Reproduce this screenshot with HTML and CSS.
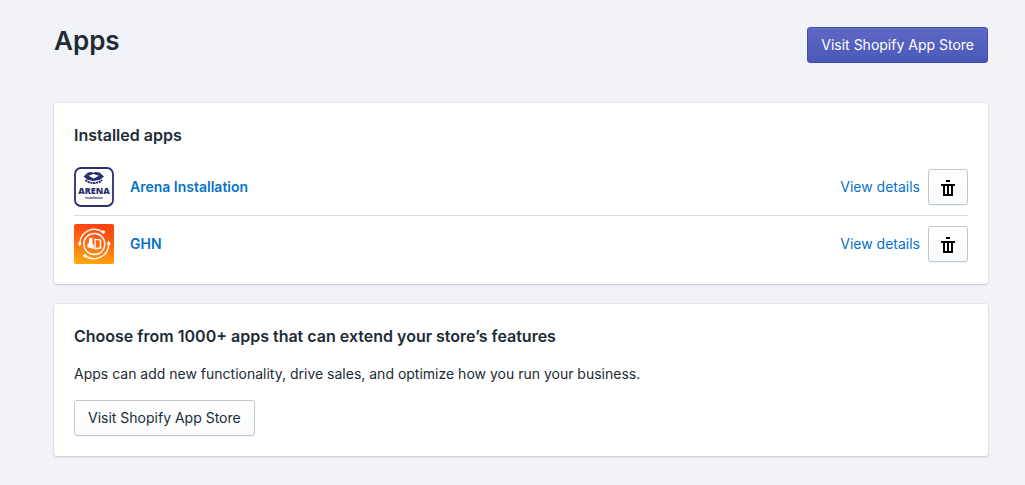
FILE: index.html
```html
<!DOCTYPE html>
<html lang="en">
<head>
<meta charset="utf-8">
<title>Apps</title>
<link rel="stylesheet" href="styles.css">
</head>
<body>
<svg class="sprite" aria-hidden="true">
  <symbol id="trash" viewBox="0 0 14 16">
    <path fill="#000" fill-rule="evenodd" d="M5 0h4v2H5zM0 4h14v2h-2v10H2V6H0zM4 6v8h2V6zM8 6v8h2V6z"/>
  </symbol>
</svg>
<main class="page">
  <header class="page-header">
    <h1 class="page-title">Apps</h1>
    <button class="button button-primary" type="button">Visit Shopify App Store</button>
  </header>

  <section class="card">
    <h2 class="card-title">Installed apps</h2>
    <ul class="app-list">
      <li class="app">
        <svg class="app-icon" viewBox="0 0 40 40" aria-hidden="true">
          <rect x="1" y="1" width="38" height="38" rx="6" fill="#fff" stroke="#29306b" stroke-width="1.8"/>
          <path fill="#29306b" fill-rule="evenodd" d="M9.500 9.500l4.500-4 3.500-.5 2 .8 2-.8 4 .5 4.500 4-4 3.200-6.500 1.300-6-1.300zM14.500 8.800l5 2.700 5.500-2.700-5.500-1.800z"/>
          <path fill="none" stroke="#29306b" stroke-width="2" stroke-dasharray="2.200 .6" d="M11.500 13c2 2 4.500 3 8.200 3s6.300-1 8.300-3"/>
          <text class="arena-name" x="20" y="27" text-anchor="middle">ARENA</text>
          <text class="arena-sub" x="20" y="32" text-anchor="middle">Installation</text>
        </svg>
        <a class="app-name" href="#arena">Arena Installation</a>
        <a class="details" href="#arena-details">View details</a>
        <button class="button button-icon" type="button" aria-label="Delete Arena Installation"><svg class="trash" aria-hidden="true"><use href="#trash"/></svg></button>
      </li>
      <li class="app">
        <svg class="app-icon" viewBox="0 0 40 40" aria-hidden="true">
          <defs>
            <linearGradient id="flame" x1="0.600" y1="0" x2="0.400" y2="1">
              <stop offset="0" stop-color="#ff4012"/>
              <stop offset=".5" stop-color="#ff6a10"/>
              <stop offset="1" stop-color="#ffa80c"/>
            </linearGradient>
          </defs>
          <rect width="40" height="40" rx="2" fill="url(#flame)"/>
          <g fill="none" stroke="#fff" stroke-width="1.400" stroke-linecap="round">
            <circle cx="20.300" cy="20" r="10.500"/>
            <path d="M29 8.200A14.700 14.700 0 0 0 5.800 18.500M11 31.600A14.700 14.700 0 0 0 34.700 20"/>
          </g>
          <g fill="#fff">
            <circle cx="29.200" cy="8" r="1.800"/>
            <circle cx="11" cy="31.800" r="1.800"/>
            <path d="M34.700 16.500l2.200 4h-4.400zM5.800 22.500l-2.200-4H8z"/>
            <path fill-rule="evenodd" d="M15 14.500l3.500-1v6.500l1.500 1v4l-6.500-1.800v-3.500l1.500-.7zM20.500 14.500l6.700 1v9l-6.700 1.200zM21.800 16v8l4-.8v-6.600z"/>
          </g>
        </svg>
        <a class="app-name" href="#ghn">GHN</a>
        <a class="details" href="#ghn-details">View details</a>
        <button class="button button-icon" type="button" aria-label="Delete GHN"><svg class="trash" aria-hidden="true"><use href="#trash"/></svg></button>
      </li>
    </ul>
  </section>

  <section class="card">
    <h2 class="card-title">Choose from 1000+ apps that can extend your store’s features</h2>
    <p class="card-text">Apps can add new functionality, drive sales, and optimize how you run your business.</p>
    <button class="button" type="button">Visit Shopify App Store</button>
  </section>
</main>
</body>
</html>
```
FILE: styles.css
```css
* { box-sizing: border-box; }

body {
  margin: 0;
  background: #f2f3f8;
  color: #212b36;
  font: 14px/20px Inter, "Liberation Sans", sans-serif;
}

.sprite { position: absolute; width: 0; height: 0; }

.page { padding: 27px 37px 28px 54px; }

.page-header {
  display: flex;
  align-items: flex-start;
  justify-content: space-between;
  margin-bottom: 40px;
}

.page-title {
  margin: 0;
  font-size: 26px;
  font-weight: 600;
  line-height: 28px;
}

.button {
  height: 36px;
  padding: 0 13px;
  border: 1px solid #bcc7d1;
  border-radius: 3px;
  background: linear-gradient(#fff, #f9fafb);
  box-shadow: 0 1px 0 rgba(22, 29, 37, 0.05);
  color: #212b36;
  font: inherit;
  cursor: pointer;
}

.button-primary {
  border-color: #3f4eae;
  background: linear-gradient(#5d68c3, #4a59b8);
  box-shadow: inset 0 1px 0 #6571c9;
  color: #fff;
}

.button-icon {
  display: flex;
  align-items: center;
  justify-content: center;
  width: 40px;
  padding: 2px 0 0;
}

.trash { width: 14px; height: 16px; }

.card {
  padding: 20px;
  border-radius: 3px;
  background: #fff;
  box-shadow: 0 0 0 1px rgba(63, 63, 68, 0.06), 0 1px 2px rgba(63, 63, 68, 0.18);
}

.card + .card { margin-top: 20px; }

.card-title {
  margin: 0;
  font-size: 16px;
  font-weight: 600;
  line-height: 24px;
}

.card-text { margin: 16px 0; }

.app-list {
  margin: 12px 0 0;
  padding: 0;
  list-style: none;
}

.app {
  display: flex;
  align-items: center;
  padding: 8px 0;
}

.app + .app {
  padding-bottom: 0;
  border-top: 1px solid #dadcdf;
}

.app-icon { flex: none; width: 40px; height: 40px; }

.app-name, .details { color: #0872c8; text-decoration: none; }

.app-name { flex: 1; margin-left: 16px; font-weight: 600; }

.details { margin-right: 8px; }

.arena-name { fill: #29306b; font: 800 9px "Open Sans", sans-serif; }

.arena-sub { fill: #29306b; font: 700 3px "Open Sans", sans-serif; }
```
